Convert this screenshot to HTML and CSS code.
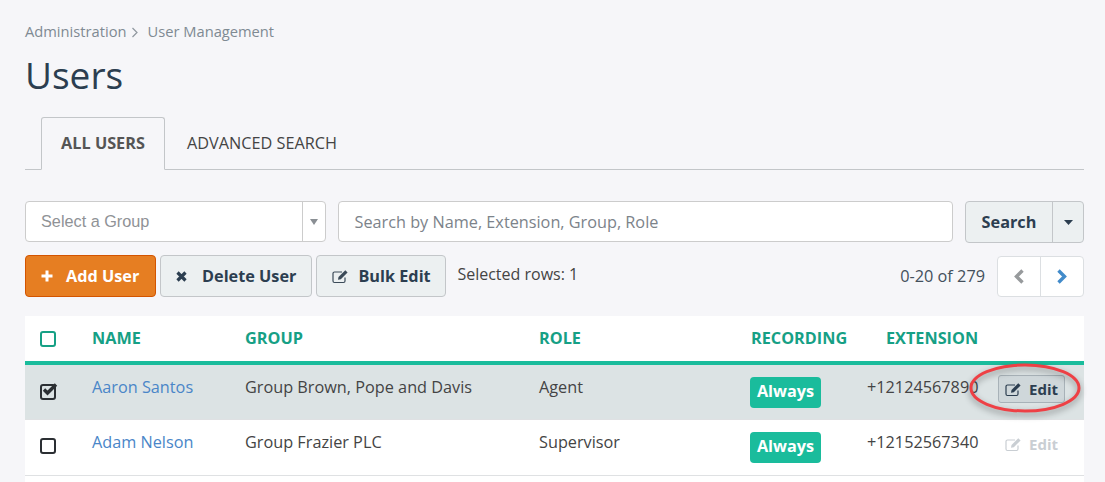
FILE: index.html
```html
<!DOCTYPE html>
<html lang="en">
<head>
<meta charset="utf-8">
<title>Users</title>
<link rel="stylesheet" href="styles.css">
</head>
<body>
<main class="page">
  <nav class="crumbs">
    <span>Administration</span>
    <svg class="crumb-sep" width="8" height="11" viewBox="0 0 8 11"><path d="M1.500 1l4.500 4.500L1.500 10" fill="none" stroke="#8f979f" stroke-width="1.200"/></svg>
    <span>User Management</span>
  </nav>
  <h1 class="title">Users</h1>
  <div class="tabs">
    <div class="tab active">ALL USERS</div>
    <div class="tab">ADVANCED SEARCH</div>
  </div>
  <div class="filters">
    <div class="select">
      <span class="select-text">Select a Group</span>
      <span class="select-arrow"><svg width="8" height="6" viewBox="0 0 8 6"><path d="M0 0h8L4 6z" fill="#8a8f94"/></svg></span>
    </div>
    <div class="search-input">Search by Name, Extension, Group, Role</div>
    <div class="search-btn">
      <span class="search-label">Search</span>
      <span class="search-caret"><svg width="9" height="5" viewBox="0 0 9 5"><path d="M0 0h9L4.500 5z" fill="#2c3e50"/></svg></span>
    </div>
  </div>
  <div class="actions">
    <button class="btn primary"><svg class="ic" width="12" height="12" viewBox="0 0 12 12"><path d="M6 0.500v11M0.500 6h11" stroke="#fff" stroke-width="3" fill="none"/></svg>Add User</button>
    <button class="btn"><svg class="ic-x" width="11" height="11" viewBox="0 0 11 11"><path d="M1.500 1.500l8 8M9.500 1.500l-8 8" stroke="#2c3e50" stroke-width="3.200" fill="none"/></svg>Delete User</button>
    <button class="btn bulk"><svg class="ic-e" width="17" height="15" viewBox="0 0 17 15"><use href="#edit"/></svg>Bulk Edit</button>
    <span class="selected">Selected rows: 1</span>
    <span class="count">0-20 of 279</span>
    <div class="pager">
      <span class="page-btn"><svg width="12" height="15" viewBox="0 0 12 15"><path d="M9.500 1.500L3.500 7.500l6 6" fill="none" stroke="#979a9c" stroke-width="3.400"/></svg></span>
      <span class="page-btn next"><svg width="12" height="15" viewBox="0 0 12 15"><path d="M2.500 1.500L8.500 7.500l-6 6" fill="none" stroke="#428bca" stroke-width="3.400"/></svg></span>
    </div>
  </div>
  <section class="table">
    <div class="row head">
      <span class="cb teal"></span>
      <span>NAME</span><span>GROUP</span><span>ROLE</span><span>RECORDING</span><span class="ext-head">EXTENSION</span><span></span>
    </div>
    <div class="row selected-row">
      <span class="cb checked"><svg width="17" height="14" viewBox="0 0 17 14"><path d="M3 6.500l3.500 3.500L15 1.500" fill="none" stroke="#2b2f33" stroke-width="3.400"/></svg></span>
      <a class="name">Aaron Santos</a><span>Group Brown, Pope and Davis</span><span>Agent</span>
      <span class="badge">Always</span><span>+12124567890</span>
      <button class="edit on"><svg width="17" height="15" viewBox="0 0 17 15"><use href="#edit"/></svg>Edit</button>
    </div>
    <div class="row plain">
      <span class="cb"></span>
      <a class="name">Adam Nelson</a><span>Group Frazier PLC</span><span>Supervisor</span>
      <span class="badge">Always</span><span>+12152567340</span>
      <button class="edit off"><svg width="17" height="15" viewBox="0 0 17 15"><use href="#edit"/></svg>Edit</button>
    </div>
  </section>
  <svg class="ring" width="124" height="64" viewBox="0 0 124 64"><ellipse cx="62" cy="30" rx="54" ry="23" fill="none" stroke="#ee4045" stroke-width="3"/></svg>
</main>
<svg class="defs" width="0" height="0"><defs><g id="edit" fill="none" stroke="currentColor"><path d="M13 8.500V12a1.500 1.500 0 0 1-1.500 1.500h-9A1.500 1.500 0 0 1 1 12V4.500A1.500 1.500 0 0 1 2.500 3H10" stroke-width="1.200"/><path d="M6 10.800l.5-2.800L13.300 1.200l2.300 2.300-6.800 6.800z" fill="currentColor" stroke="none"/></g></defs></svg>
</body>
</html>
```
FILE: styles.css
```css
* { box-sizing: border-box; }
html, body { margin: 0; height: 482px; overflow: hidden; }
body { background: #f6f6f9; font-family: "Open Sans", sans-serif; color: #333; }
.page { position: relative; padding: 22px 21px 0 25px; }
.crumbs { display: flex; align-items: center; height: 19px; font-size: 14.7px; line-height: 19px; color: #7f8a93; }
.crumb-sep { margin: 1px 8px 0 5px; }
.title { margin: 9px 0 0; font-size: 37px; line-height: 49px; font-weight: 400; color: #2c3e50; height: 49px; }
.tabs { display: flex; margin-top: 18px; padding-left: 16px; height: 53px; border-bottom: 1px solid #c3c6c9; }
.tab { height: 53px; padding: 0 22px; line-height: 52px; font-size: 16.25px; color: #444; }
.tab.active { width: 124px; padding: 0; text-align: center; line-height: 50px; font-weight: 700; color: #555; border: 1px solid #c3c6c9; border-bottom-color: #f6f6f9; border-radius: 3px 3px 0 0; }
.filters { display: flex; margin-top: 31px; }
.select { display: flex; width: 301px; height: 41px; background: #fff; border: 1px solid #ccc; border-radius: 4px; font-family: "Liberation Sans", sans-serif; font-size: 16.25px; color: #8f9296; }
.select-text { flex: 1; padding-left: 15px; line-height: 38px; border-right: 1px solid #ccc; }
.select-arrow { width: 22px; display: flex; align-items: center; justify-content: center; }
.search-input { width: 615px; height: 41px; margin-left: 12px; padding-left: 15.500px; background: #fff; border: 1px solid #ccc; border-radius: 4px; font-size: 16.25px; line-height: 41px; color: #7c838a; }
.search-btn { display: flex; width: 119px; height: 42px; margin-left: 12px; background: #ecf0f1; border: 1px solid #c3c6c9; border-radius: 4px; }
.search-label { width: 87px; text-align: center; font-size: 16.25px; font-weight: 700; line-height: 41px; color: #2c3e50; border-right: 1px solid #c3c6c9; }
.search-caret { flex: 1; display: flex; align-items: center; justify-content: center; }
.actions { display: flex; align-items: center; margin-top: 12px; height: 42px; }
.btn { display: flex; align-items: center; height: 42px; margin: 0 4px 0 0; padding: 0 15px 0 15px; background: #ecf0f1; border: 1px solid #c3c6c9; border-radius: 4px; font-family: "Open Sans", sans-serif; font-size: 16.25px; font-weight: 700; color: #2c3e50; white-space: nowrap; }
.btn.primary { width: 131px; background: #e67e22; border-color: #d35400; color: #fff; }
.btn.bulk { width: 130px; padding-right: 0; }
.ic { margin-right: 13px; }
.ic-x { margin-right: 15px; }
.ic-e { margin-right: 9px; color: #3b4a58; }
.selected { margin-left: 7px; font-size: 16px; color: #444; position: relative; top: -2px; }
.count { margin-left: auto; font-size: 16.3px; color: #44505c; }
.pager { display: flex; width: 87px; height: 41px; margin-left: 12px; background: #fff; border: 1px solid #dcdfe2; border-radius: 4px; }
.page-btn { flex: 1; display: flex; align-items: center; justify-content: center; }
.page-btn.next { border-left: 1px solid #dcdfe2; }
.table { margin-top: 19px; background: #fff; height: 170px; font-size: 16.25px; color: #444; }
.row { display: grid; grid-template-columns: 67px 153px 294px 212px 116px 131px 86px; height: 56px; padding-top: 11px; border-bottom: 1px solid #dfe1e3; }
.row > :first-child { margin-left: 15px; }
.head { height: 49px; padding-top: 9px; border-bottom: 4px solid #1abc9c; font-weight: 700; color: #16a085; line-height: 26px; }
.ext-head { padding-left: 19px; }
.selected-row { height: 55px; background: #dce3e4; }
.name { color: #4a86c8; }
.cb { display: flex; width: 16px; height: 16px; margin-top: 7px; border: 2px solid #2b2f33; border-radius: 3px; align-items: center; }
.selected-row .cb { margin-top: 8px; }
.head .cb { margin-top: 6px; border-color: #16a085; }
.cb svg { flex: none; margin-top: -4px; margin-left: -1px; }
.badge { justify-self: start; width: 71px; height: 31px; margin: 1px 0 0 -1px; background: #1abc9c; border-radius: 4px; text-align: center; font-weight: 700; line-height: 29px; color: #fff; }
.edit { display: flex; align-items: center; justify-content: center; width: 67px; height: 28px; margin-top: -1px; padding: 0; font-family: "Open Sans", sans-serif; font-size: 15px; font-weight: 700; border: 1px solid transparent; border-radius: 3px; background: none; }
.edit svg { margin-right: 7px; }
.edit.on { background: #cfd7da; border-color: #a8b2b8; color: #2c3e50; }
.edit.off { color: #c9ced3; }
.ring { position: absolute; left: 963px; top: 358px; filter: drop-shadow(0 3px 3px rgba(0,0,0,.4)); }
.defs { position: absolute; }
```
